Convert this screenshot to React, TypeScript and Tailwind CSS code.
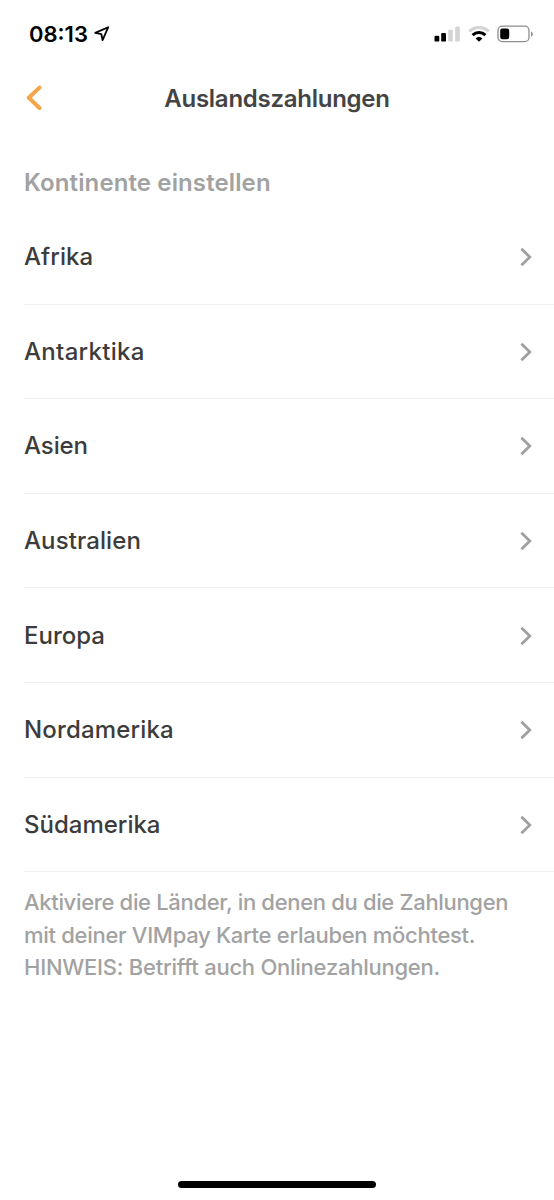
// Settings screen for foreign payments: one row per continent.

const continents = [
  { name: "Afrika", spacing: "tracking-[0.1px]" },
  { name: "Antarktika", spacing: "tracking-[0.3px]" },
  { name: "Asien", spacing: "tracking-[-0.1px]" },
  { name: "Australien", spacing: "tracking-[0.1px]" },
  { name: "Europa", spacing: "tracking-normal" },
  { name: "Nordamerika", spacing: "tracking-[0.17px]" },
  { name: "Südamerika", spacing: "tracking-normal" },
];

function StatusBar() {
  return (
    <div className="flex h-[68px] items-center justify-between pl-[29px] pr-5 text-black">
      <div className="flex items-center gap-1.5">
        <span className="text-[22px] font-semibold leading-none">08:13</span>
        <svg width="16" height="16" viewBox="0 0 16 16" fill="none" stroke="currentColor" strokeWidth="1.8" strokeLinejoin="round">
          <path d="M14.2 1.2 1.2 6.9 7.4 8.2 8.6 14.2Z" />
        </svg>
      </div>
      <div className="flex items-center gap-[7px]">
        <svg width="27" height="18" viewBox="0 0 27 18" fill="currentColor">
          <rect x="0.5" y="10.8" width="4.8" height="5.8" rx="1.2" />
          <rect x="7.2" y="8" width="4.8" height="8.6" rx="1.2" />
          <rect x="14.2" y="4.8" width="4.6" height="11.8" rx="1.2" fill="#d4d4d4" />
          <rect x="21.2" y="1.6" width="4.6" height="15" rx="1.2" fill="#d4d4d4" />
        </svg>
        <svg width="22" height="18" viewBox="0 0 22 18" fill="none" strokeWidth="3">
          <path d="M1.2 6.3a14.2 14.2 0 0 1 19.6 0" stroke="#d4d4d4" />
          <path d="M4.6 10.2a9.2 9.2 0 0 1 12.8 0" stroke="currentColor" />
          <path d="M11 16.7 7.6 13.4a5 5 0 0 1 6.8 0Z" fill="currentColor" />
        </svg>
        <svg width="37" height="18" viewBox="0 0 37 18" fill="none">
          <rect x="1" y="1.2" width="31" height="15.4" rx="4.2" stroke="#8e8e8e" strokeWidth="1.3" />
          <rect x="3.2" y="3.5" width="9" height="10.8" rx="2.2" fill="currentColor" />
          <path d="M34 6.4c2.4.9 2.4 4.4 0 5.2Z" fill="#8e8e8e" />
        </svg>
      </div>
    </div>
  );
}

function Header() {
  return (
    <header className="grid h-[60px] grid-cols-[64px_1fr_64px] items-center">
      <button aria-label="Zurück" className="pl-[25px] text-[#f5a54a]">
        <svg width="18" height="26" viewBox="0 0 18 26" fill="none" stroke="currentColor" strokeWidth="4" strokeLinecap="round" strokeLinejoin="round">
          <path d="M14.5 2.6 3.8 12.8l10.7 10.2" />
        </svg>
      </button>
      <h1 className="whitespace-nowrap pt-px text-center text-[24px] font-semibold tracking-[-0.26px] text-[#444]">
        Auslandszahlungen
      </h1>
    </header>
  );
}

export default function App() {
  return (
    <main className="flex h-[1200px] w-[554px] flex-col overflow-hidden bg-white font-['Inter','Liberation_Sans',sans-serif]">
      <StatusBar />
      <Header />
      <h2 className="flex h-[82px] items-center pl-6 pt-[28px] text-[24px] font-semibold tracking-[0.12px] text-[#a2a2a2]">
        <span>Kontinente einstellen</span>
      </h2>
      <ul className="pl-6">
        {continents.map((c) => (
          <li key={c.name} className="flex h-[94.6px] items-center justify-between border-b border-[#efefef] pr-[21px] pt-px">
            <span className={`text-[24px] font-medium text-[#3c3c3c] ${c.spacing}`}>{c.name}</span>
            <svg width="14" height="20" viewBox="0 0 14 20" fill="none" stroke="#a0a0a0" strokeWidth="2.8">
              <path d="m2.4 1.8 8.4 8.2-8.4 8.2" />
            </svg>
          </li>
        ))}
      </ul>
      <p className="whitespace-nowrap pl-6 pt-[14px] text-[22px] font-medium leading-[32.5px] text-[#a2a2a2]">
        <span className="block tracking-[-0.33px]">Aktiviere die Länder, in denen du die Zahlungen</span>
        <span className="block tracking-[-0.29px]">mit deiner VIMpay Karte erlauben möchtest.</span>
        <span className="block tracking-[-0.25px]">HINWEIS: Betrifft auch Onlinezahlungen.</span>
      </p>
      <div className="mx-auto mb-[12px] mt-auto h-[7px] w-[198px] rounded-full bg-black" />
    </main>
  );
}
